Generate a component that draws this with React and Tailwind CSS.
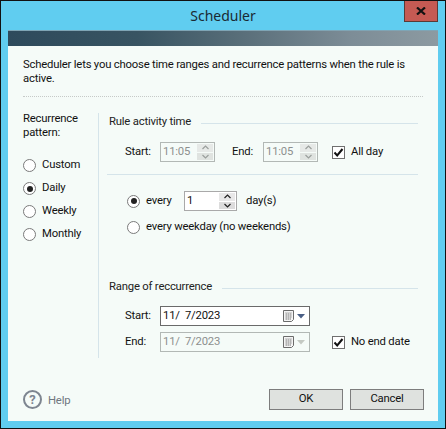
import React from "react";

function Radio({ checked }) {
  return (
    <span className="flex h-[13px] w-[13px] shrink-0 items-center justify-center rounded-full border border-[#7a7a7a] bg-white">
      {checked && <span className="h-[6px] w-[6px] rounded-full bg-[#222]" />}
    </span>
  );
}

function Check() {
  return (
    <span className="flex h-[13px] w-[13px] shrink-0 items-center justify-center border border-[#6f6f6f] bg-white">
      <svg width="11" height="11" viewBox="0 0 11 11">
        <path d="M1.5 5.5 L4.2 8.5 L9.5 2" fill="none" stroke="#111" strokeWidth="2" />
      </svg>
    </span>
  );
}

function Chevron({ up, color }) {
  return (
    <svg width="7" height="5" viewBox="0 0 7 5">
      <path d={up ? "M0.5 4 L3.5 1 L6.5 4" : "M0.5 1 L3.5 4 L6.5 1"} fill="none" stroke={color} strokeWidth="1.2" />
    </svg>
  );
}

function Spin({ disabled }) {
  const c = disabled ? "#9a9f9c" : "#222";
  return (
    <span className="ml-auto flex h-full w-[16px] flex-col gap-px">
      <span className={`flex flex-1 items-center justify-center ${disabled ? "bg-[#e6e9e7]" : "bg-[#e8e8e8]"}`}><Chevron up color={c} /></span>
      <span className={`flex flex-1 items-center justify-center ${disabled ? "bg-[#dfe3e0]" : "bg-[#dcdcdc]"}`}><Chevron color={c} /></span>
    </span>
  );
}

function TimeBox() {
  return (
    <span className="flex h-[20px] w-[55px] items-center border border-[#b2b8b5] bg-[#f5fbf8] p-px pl-[2px] text-[#8d8f8e]">
      11:05
      <Spin disabled />
    </span>
  );
}

function Calendar({ arrow }) {
  return (
    <span className="ml-auto flex items-center gap-[3px] pr-[4px]">
      <svg width="11" height="12" viewBox="0 0 11 12">
        <path d="M0.5 0.5 H10.5 V9.5 L8.5 11.5 H0.5 Z" fill="#f4f4f4" stroke="#6b6b6b" />
        <path d="M2 3 H9 M2 5 H9 M2 7 H9 M2 9 H8 M3.5 3 V10 M5.5 3 V10 M7.5 3 V10" stroke="#b5b5b5" strokeWidth="1" fill="none" />
      </svg>
      <svg width="8" height="5" viewBox="0 0 8 5">
        <path d="M0 0 H8 L4 4.5 Z" fill={arrow} />
      </svg>
    </span>
  );
}

function Section({ title }) {
  return (
    <div className="flex items-center gap-[10px]">
      <span className="leading-[16px] text-[#222]">{title}</span>
      <span className="mt-[3px] h-px flex-1 bg-[#d5e4ea]" />
    </div>
  );
}

function Button({ children }) {
  return (
    <span className="flex h-[21px] w-[74px] items-center justify-center border border-[#7d7d7d] bg-[#dfe2df] text-[#111]">
      {children}
    </span>
  );
}

export default function App() {
  const radios = [["Custom", false], ["Daily", true], ["Weekly", false], ["Monthly", false]];
  return (
    <div className="flex h-[429px] w-[446px] flex-col border border-[#111] bg-[#60cdf0] font-['Roboto','Open_Sans',sans-serif] text-[11.3px] tracking-[-0.2px] text-[#111]">
      <div className="relative flex h-[29px] shrink-0 items-center justify-center font-['Noto_Sans',sans-serif] text-[14px] tracking-normal text-[#1a2a33]">
        Scheduler
        <span className="absolute right-[7px] top-0 flex h-[21px] w-[34px] items-center justify-center border border-[#5a3a36] border-t-0 bg-[#c55a53]">
          <svg width="10" height="8" viewBox="0 0 10 8"><path d="M1 0.5 L9 7.5 M9 0.5 L1 7.5" stroke="#111" strokeWidth="2.2" /></svg>
        </span>
      </div>
      <div className="mx-[7px] mb-[7px] flex flex-1 flex-col bg-[#f5fbf8]">
        <div className="h-[16px] shrink-0 border-t border-[#7fa5b5] bg-[linear-gradient(90deg,#2e4a5c_0%,#385462_30%,#5a6f7a_55%,#7d8d97_80%,#8c9aa1_100%)]" />
        <p className="mx-[15px] mt-[12px] h-[39px] border-b border-dotted border-[#c6cac8] leading-[13.5px]">
          Scheduler lets you choose time ranges and recurrence patterns when the rule is active.
        </p>
        <div className="ml-[15px] mr-[20px] mt-[16px] flex">
          <div className="w-[75px] shrink-0">
            <div className="-mt-[1px] leading-[14px]">Recurrence<br />pattern:</div>
            <div className="mt-[19px] flex flex-col gap-[10px]">
              {radios.map(([l, c]) => (
                <div key={l} className="flex h-[13px] items-center gap-[6px]">
                  <Radio checked={c} />
                  <span>{l}</span>
                </div>
              ))}
            </div>
          </div>
          <div className="h-[245px] flex-1 border-l border-[#d5e4ea] pl-[8px]">
            <div className="mt-[1px] pl-[2px]"><Section title="Rule activity time" /></div>
            <div className="mt-[12px] flex h-[20px] items-center pl-[18px]">
              <span className="w-[35px]">Start:</span>
              <TimeBox />
              <span className="ml-[17px] w-[31px]">End:</span>
              <TimeBox />
              <span className="ml-[14px] flex items-center gap-[6px]"><Check />All day</span>
            </div>
            <div className="mt-[12px] h-px bg-[#d5e4ea]" />
            <div className="mt-[16px] flex h-[20px] items-center pl-[20px]">
              <Radio checked />
              <span className="ml-[6px] w-[38px]">every</span>
              <span className="flex h-[20px] w-[53px] items-center border border-[#a9a9a9] bg-white p-px pl-[2px]">
                1
                <Spin />
              </span>
              <span className="ml-[9px]">day(s)</span>
            </div>
            <div className="mt-[9px] flex h-[14px] items-center gap-[6px] pl-[20px]">
              <Radio />
              every weekday (no weekends)
            </div>
            <div className="mt-[45px] pl-[2px]"><Section title="Range of reccurrence" /></div>
            <div className="mt-[11px] flex h-[20px] items-center pl-[18px]">
              <span className="w-[35px]">Start:</span>
              <span className="flex h-[20px] w-[150px] items-center border border-[#6a6a6a] bg-white pl-[2px] whitespace-pre">
                {"11/  7/2023"}
                <Calendar arrow="#4a5f85" />
              </span>
            </div>
            <div className="mt-[6px] flex h-[20px] items-center pl-[18px]">
              <span className="w-[35px]">End:</span>
              <span className="flex h-[20px] w-[150px] items-center border border-[#b2b8b5] pl-[2px] text-[#8d8f8e] whitespace-pre">
                {"11/  7/2023"}
                <Calendar arrow="#c4c9c3" />
              </span>
              <span className="ml-[22px] flex items-center gap-[6px]"><Check />No end date</span>
            </div>
          </div>
        </div>
        <div className="mt-auto mb-[11px] flex items-center pl-[15px] pr-[14px]">
          <span className="flex h-[19px] w-[19px] items-center justify-center rounded-full border-2 border-[#7d8590] text-[13px] font-bold text-[#7d8590]">?</span>
          <span className="ml-[6px] pt-[3px] text-[#6f7780]">Help</span>
          <span className="ml-auto flex gap-[7px]">
            <Button>OK</Button>
            <Button>Cancel</Button>
          </span>
        </div>
      </div>
    </div>
  );
}
